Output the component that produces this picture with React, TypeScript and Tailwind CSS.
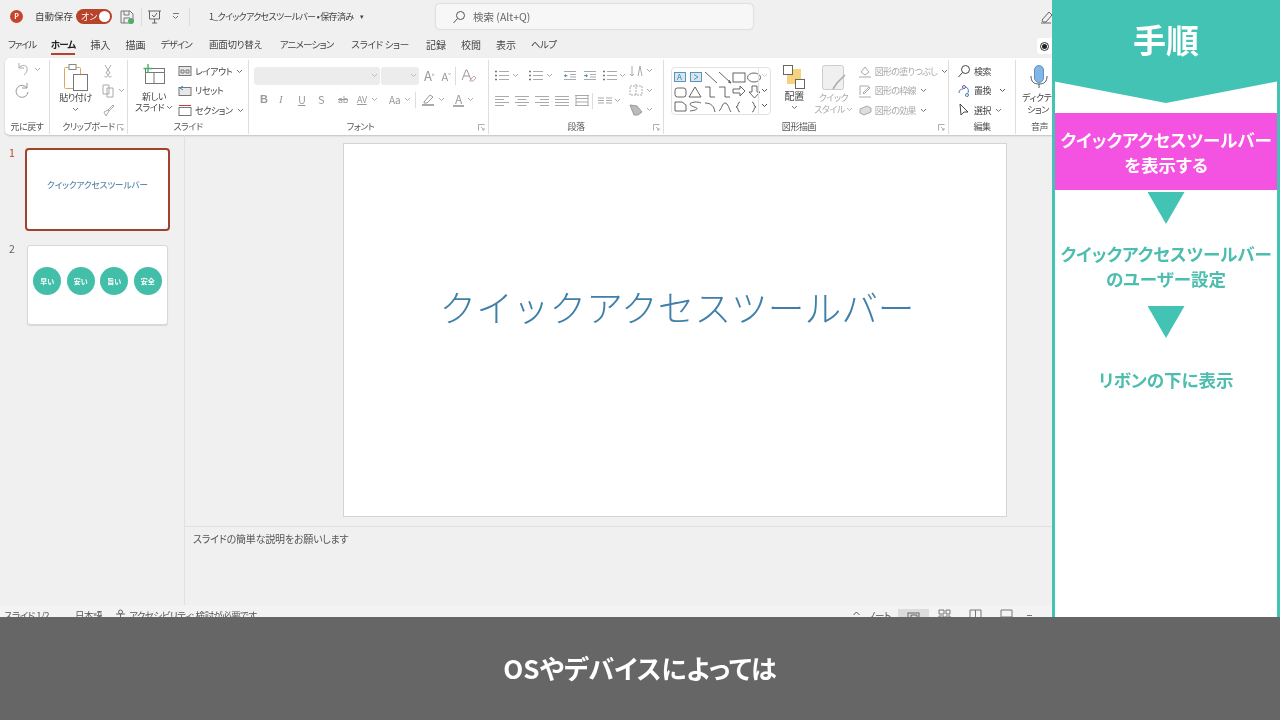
import React from "react";

const Chev = ({ c = "#777" }: { c?: string }) => (
  <svg width="7" height="5" viewBox="0 0 7 5" className="shrink-0"><path d="M1 1l2.5 2.5L6 1" fill="none" stroke={c} strokeWidth="1" /></svg>
);

const Ico = ({ w = 14, h = 14, children }: { w?: number; h?: number; children: React.ReactNode }) => (
  <svg width={w} height={h} viewBox={`0 0 ${w} ${h}`} fill="none" stroke="#8a8a8a" strokeWidth="1" className="shrink-0">{children}</svg>
);

const Launcher = () => (
  <svg width="7" height="7" viewBox="0 0 7 7" className="absolute right-[3px] bottom-[3px]" fill="none" stroke="#999" strokeWidth="0.8"><path d="M.5 6.5v-6h6M3 3l3 3M6 4v2H4" /></svg>
);

const Group = ({ w, label, children, launcher, lc = "" }: { w: string; label: string; children: React.ReactNode; launcher?: boolean; lc?: string }) => (
  <div className={`relative flex flex-col shrink-0 h-[74px] pt-[2px] border-r border-[#dedede] ${w}`}>
    <div className="flex-1 flex min-h-0">{children}</div>
    <div className={`text-center text-[9px] leading-[12px] text-[#555] pb-[1px] ${lc}`}>{label}</div>
    {launcher && <Launcher />}
  </div>
);

const Bullets = () => (
  <Ico w={14} h={11}><path d="M4 1.500h10M4 5.500h10M4 9.500h10" stroke="#aaa" /><path d="M0 1.500h2M0 5.500h2M0 9.500h2" stroke="#777" strokeWidth="1.600" /></Ico>
);
const Indent = ({ flip }: { flip?: boolean }) => (
  <Ico w={14} h={11}><path d="M1 1.500h12M7 4.500h6M7 7h6M1 9.500h12" stroke="#aaa" /><path d={flip ? "M1 5.700h3M3 4.500l1.500 1.200L3 7" : "M4.500 5.700h-3M3 4.500L1.500 5.700 3 7"} stroke="#3f88b8" /></Ico>
);
const Align = ({ d }: { d: string }) => (
  <Ico w={14} h={11}><path d={d} stroke="#aaa" /></Ico>
);

const SmallRow = ({ icon, label, chev, gray }: { icon: React.ReactNode; label: string; chev?: boolean; gray?: boolean }) => (
  <div className={`flex items-center gap-[2px] h-[19.500px] text-[9px] whitespace-nowrap ${gray ? "text-[#a8a8a8] tracking-[-0.7px]" : "text-[#444] tracking-[-0.4px]"}`}>
    {icon}
    <span className="ml-[1px]">{label}</span>
    {chev && <span className="ml-[2px]"><Chev /></span>}
  </div>
);

const Gallery = () => (
  <svg width="100" height="47" viewBox="0 0 100 47" fill="none" stroke="#555" strokeWidth="0.9" className="absolute left-0 top-0">
    <rect x="2.500" y="4.500" width="11" height="9" fill="#d8e6f0" stroke="#4a8db5" />
    <text x="5" y="12" fontSize="8" fill="#3f7fa8" stroke="none">A</text>
    <rect x="18.500" y="4.500" width="11" height="9" fill="#d8e6f0" stroke="#4a8db5" />
    <path d="M22 6.500l4 2.500-4 2.500" stroke="#4a8db5" />
    <path d="M33 4l12 11M47 4l12 11M57 12l2 3-3-1" />
    <rect x="61" y="5" width="12" height="9" />
    <ellipse cx="82" cy="9.500" rx="6.500" ry="4.500" />
    <rect x="3" y="20" width="11" height="9" rx="2.500" />
    <path d="M17 29l6-10 6 10zM33 19h5v10h5M47 19h6v10h5M61 21h7v-3l5 5-5 5v-3h-7zM80 18h5v6h3l-5.500 6-5.500-6h3z" />
    <path d="M3 34h7l4 3v6H3zM18 43c8-1 9-3 4-4-5-2-6-4 1-5 2 0 4 0 6 1M33 35c6 0 9 3 10 9M47 43c3-2 3-8 6-8s4 6 6 9" />
    <path d="M68 34c-3 0-1 5-4 5 3 0 1 5 4 5M80 34c3 0 1 5 4 5-3 0-1 5-4 5" />
  </svg>
);

const Ribbon = () => (
  <div className="ml-[5px] w-[1275px] h-[77px] bg-white rounded-[5px] shadow-[0_1px_2px_rgba(0,0,0,0.2)] flex items-center overflow-hidden tracking-[-0.4px]">
    <Group w="w-[45px]" label="元に戻す">
      <div className="flex flex-col pl-[10px] -mt-[3px]">
        <div className="flex items-center gap-[3px] h-[21px]">
          <Ico w={16} h={16}><path d="M4 2v5h5M4 7c2-3 7-4 8 0 .6 2-.5 5-3 7" stroke="#aaa" /></Ico>
          <Chev c="#aaa" />
        </div>
        <div className="h-[21px] flex items-center">
          <Ico w={16} h={16}><path d="M12 1v5H7M12 6a6 6 0 1 0 1 4" stroke="#999" /></Ico>
        </div>
      </div>
    </Group>
    <Group w="w-[78px]" label="クリップボード" launcher>
      <div className="w-[46px] flex flex-col items-center pt-[1px] pl-[5px]">
        <svg width="26" height="28" viewBox="0 0 26 28" fill="none">
          <rect x="1.500" y="4.500" width="16" height="21" rx="1" stroke="#d9a857" />
          <rect x="6" y="1.500" width="7" height="5" fill="#fff" stroke="#888" />
          <rect x="10.500" y="11.500" width="14" height="16" fill="#fff" stroke="#777" />
        </svg>
        <span className="text-[9px] leading-[12px] mt-[1px] text-[#444] whitespace-nowrap">貼り付け</span>
        <span className="mt-[3px]"><Chev /></span>
      </div>
      <div className="flex flex-col pl-[3px]">
        <div className="h-[19px] flex items-center pl-[2px]"><Ico><path d="M4 1l5 8M10 1L5 9M5 9a2 2 0 1 1-1.500 3.500M9 9a2 2 0 1 0 1.500 3.500" stroke="#aaa" /></Ico></div>
        <div className="h-[20px] flex items-center gap-[3px] pl-[2px]"><Ico><path d="M2 1h6v9H2zM6 4h6v9H6z" stroke="#aaa" /></Ico><Chev c="#aaa" /></div>
        <div className="h-[19px] flex items-center pl-[2px]"><Ico><path d="M7 7l5-5 1 1-5 5zM7 7l-4 2 2 4 3-5" stroke="#aaa" /></Ico></div>
      </div>
    </Group>
    <Group w="w-[121px]" label="スライド">
      <div className="w-[50px] flex flex-col items-center pt-[2px] pl-[2px]">
        <svg width="24" height="21" viewBox="0 0 24 21" fill="none">
          <rect x="3.500" y="4.500" width="19" height="15" stroke="#777" fill="#fff" />
          <path d="M3.500 8.500h19M12 8.500v11" stroke="#777" />
          <path d="M6 0v9M1.500 4.500h9" stroke="#4caf6a" strokeWidth="1.400" />
        </svg>
        <span className="text-[9px] leading-[11px] mt-[6px] text-[#444]">新しい</span>
        <span className="text-[9px] leading-[11px] text-[#444] whitespace-nowrap flex items-center gap-[2px]">スライド <Chev /></span>
      </div>
      <div className="flex flex-col">
        <SmallRow icon={<Ico w={14} h={12}><rect x="1" y="1.500" width="12" height="9" fill="#e8e8e8" stroke="#777" /><path d="M3 5h3v3H3zM8 5h3v3H8z" stroke="#777" /></Ico>} label="レイアウト" chev />
        <SmallRow icon={<Ico w={14} h={12}><rect x="1" y="2.500" width="12" height="8" fill="#e8e8e8" stroke="#777" /><path d="M5 1L2 3l3 2" stroke="#3b82b5" /></Ico>} label="リセット" />
        <SmallRow icon={<Ico w={14} h={12}><rect x="1" y="3.500" width="12" height="8" fill="#fff" stroke="#777" /><path d="M1 1.500h12" stroke="#b7432a" /></Ico>} label="セクション" chev />
      </div>
    </Group>
    <Group w="w-[240px]" label="フォント" launcher lc="pr-[16px]">
      <div className="flex flex-col pl-[5px] pt-[5px]">
        <div className="flex items-center">
          <div className="w-[126px] h-[18px] bg-[#ececec] rounded-[3px] flex items-center justify-end pr-[2px]"><Chev c="#bbb" /></div>
          <div className="ml-[1px] w-[38px] h-[18px] bg-[#ececec] rounded-[3px] flex items-center justify-end pr-[2px]"><Chev c="#bbb" /></div>
          <span className="ml-[5px] text-[13px] leading-[18px] text-[#999]">A<sup className="text-[6px]">^</sup></span>
          <span className="ml-[7px] text-[11px] leading-[18px] text-[#999]">A<sup className="text-[6px]">ˇ</sup></span>
          <div className="ml-[4px] h-[18px] border-l border-[#ddd]" />
          <span className="ml-[5px]"><Ico w={16} h={15}><path d="M1 12L5 2h1l4 10M3 8h5" stroke="#999" /><path d="M9 12l4-4 2 2-3 3H9z" stroke="#c9a0a0" /></Ico></span>
        </div>
        <div className="flex items-center h-[18px] mt-[6px] pl-[6px] text-[#9a9a9a] text-[11px] leading-none">
          <b className="w-[19px] [font-family:'Liberation_Sans']">B</b>
          <i className="w-[19px] [font-family:'Liberation_Serif']">I</i>
          <u className="w-[20px]">U</u>
          <span className="w-[20px]">S</span>
          <s className="w-[19px] text-[9px]">ab</s>
          <span className="w-[14px] text-[9px] underline">AV</span>
          <span className="mr-[11px]"><Chev c="#aaa" /></span>
          <span className="text-[10px] w-[15px]">Aa</span>
          <Chev c="#aaa" />
          <div className="ml-[4px] h-[16px] border-l border-[#ddd]" />
          <span className="ml-[5px] flex items-center gap-[3px]">
            <Ico w={14} h={13}><path d="M3 9l6-7 3 2-6 6H3z" stroke="#999" /><path d="M1 12h12" stroke="#aaa" strokeWidth="2" /></Ico>
            <Chev c="#aaa" />
          </span>
          <span className="ml-[8px] flex items-center gap-[3px]">
            <span className="text-[12px] border-b-2 border-[#aaa] leading-[12px] px-[2px]">A</span>
            <Chev c="#aaa" />
          </span>
        </div>
      </div>
    </Group>
    <Group w="w-[175px]" label="段落" launcher>
      <div className="flex flex-col pl-[6px] pt-[5px] w-[140px]">
        <div className="flex items-center h-[18px]">
          <Bullets /><span className="ml-[3px] mr-[10px]"><Chev c="#aaa" /></span>
          <Bullets /><span className="ml-[3px] mr-[10px]"><Chev c="#aaa" /></span>
          <Indent /><span className="ml-[6px]"><Indent flip /></span><span className="ml-[6px]"><Bullets /></span><span className="ml-[2px]"><Chev c="#aaa" /></span>
        </div>
        <div className="flex items-center h-[18px] mt-[7px]">
          <span className="mr-[6px]"><Align d="M0 1.500h14M0 4.500h9M0 7.500h14M0 10.500h9" /></span>
          <span className="mr-[6px]"><Align d="M0 1.500h14M2.500 4.500h9M0 7.500h14M2.500 10.500h9" /></span>
          <span className="mr-[6px]"><Align d="M0 1.500h14M5 4.500h9M0 7.500h14M5 10.500h9" /></span>
          <span className="mr-[6px]"><Align d="M0 1.500h14M0 4.500h14M0 7.500h14M0 10.500h14" /></span>
          <Align d="M0 .500h14M0 10.500h14M1 3.500h12M1 7h12M1 .500v10M13 .500v10" />
          <div className="ml-[3px] h-[16px] border-l border-[#ddd]" />
          <span className="ml-[5px]"><Align d="M0 3h6M0 5.500h6M0 8h6M8 3h6M8 5.500h6M8 8h6" /></span><span className="ml-[2px]"><Chev c="#aaa" /></span>
        </div>
      </div>
      <div className="flex flex-col -mt-[1px]">
        <div className="h-[20px] flex items-center gap-[3px]"><Ico w={14} h={14}><path d="M3 2v10M1 10l2 2 2-2M9 12l2-10 2 10" stroke="#aaa" /></Ico><Chev c="#aaa" /></div>
        <div className="h-[19px] flex items-center gap-[3px]"><Ico w={14} h={14}><path d="M1 3h12v9H1zM7 1v12" stroke="#aaa" strokeDasharray="2 1" /></Ico><Chev c="#aaa" /></div>
        <div className="h-[19px] flex items-center gap-[3px]"><Ico w={14} h={14}><path d="M1 3l7 1 5 6-4 3H5z" fill="#bbb" stroke="#999" /></Ico><Chev c="#aaa" /></div>
      </div>
    </Group>
    <Group w="w-[285px]" label="図形描画" launcher lc="pr-[14px]">
      <div className="relative ml-[7px] mt-[5px] w-[100px] h-[48px] border border-[#e2e2e2] rounded-[4px] shrink-0">
        <Gallery />
        <div className="absolute right-0 top-0 w-[12px] h-full border-l border-[#e2e2e2] flex flex-col items-center justify-around">
          <Chev c="#ccc" /><Chev c="#555" /><Chev c="#555" />
        </div>
      </div>
      <div className="w-[46px] ml-[1px] flex flex-col items-center pt-[2px]">
        <svg width="24" height="26" viewBox="0 0 24 26" fill="none">
          <rect x="5" y="5" width="14" height="15" fill="#f7d27c" />
          <rect x="1.500" y="1.500" width="9" height="9" fill="#fff" stroke="#666" />
          <rect x="13.500" y="15.500" width="9" height="9" fill="#fff" stroke="#666" />
        </svg>
        <span className="text-[10px] leading-[12px] text-[#444]">配置</span>
        <span className="mt-[3px]"><Chev /></span>
      </div>
      <div className="w-[46px] ml-[-5px] flex flex-col items-center pt-[2px] text-[#aaa]">
        <svg width="26" height="28" viewBox="0 0 26 28" fill="none">
          <rect x="1.500" y="1.500" width="21" height="24" rx="2" fill="#f0f0f0" stroke="#ccc" />
          <path d="M12 25l4-6 8-8" stroke="#aaa" strokeWidth="1.500" />
        </svg>
        <span className="text-[9px] leading-[12px]">クイック</span>
        <span className="text-[9px] leading-[12px] whitespace-nowrap flex items-center gap-[1px]">スタイル <Chev c="#bbb" /></span>
      </div>
      <div className="flex flex-col pl-[2px]">
        <SmallRow gray icon={<Ico w={14} h={14}><path d="M3 8l4-5 4 5-4 3zM1 13h12" stroke="#aaa" /></Ico>} label="図形の塗りつぶし" chev />
        <SmallRow gray icon={<Ico w={14} h={14}><path d="M2 11V2h9M5 9l6-6 1 1-6 6zM1 13h12" stroke="#aaa" /></Ico>} label="図形の枠線" chev />
        <SmallRow gray icon={<Ico w={14} h={14}><path d="M2 6l7-3 4 2v4l-7 3-4-2z" fill="#ddd" stroke="#aaa" /></Ico>} label="図形の効果" chev />
      </div>
    </Group>
    <Group w="w-[67px]" label="編集">
      <div className="flex flex-col pl-[8px]">
        <SmallRow icon={<Ico><circle cx="8.500" cy="5.500" r="4" stroke="#444" /><path d="M5.500 8.500L1.500 13" stroke="#444" /></Ico>} label="検索" />
        <div className="flex items-center">
          <SmallRow icon={<Ico><path d="M2 9c0-3 2-4 4-4M9 3c2 1 3 3 2 6" stroke="#3b82b5" /><circle cx="7" cy="3" r="1.500" stroke="#7a4ea8" /><circle cx="10" cy="11" r="1.500" stroke="#3b82b5" /></Ico>} label="置換" />
          <span className="ml-[8px]"><Chev c="#555" /></span>
        </div>
        <SmallRow icon={<Ico><path d="M3 1l1 11 3-3 4 0z" stroke="#444" /></Ico>} label="選択" chev />
      </div>
    </Group>
    <Group w="w-[60px]" label="音声" lc="pr-[12px]">
      <div className="flex flex-col items-start pl-[6px]">
        <svg width="18" height="24" viewBox="0 0 18 24" fill="none" className="ml-[8px] mt-[3px]">
          <rect x="4.500" y="0.500" width="9" height="17" rx="4.500" fill="#82b6e6" stroke="#5a93c9" />
          <path d="M1 11c0 6 3 8 8 8s8-2 8-8M9 19v4" stroke="#555" />
        </svg>
        <span className="text-[9px] leading-[12px] mt-[3px] text-[#444] whitespace-nowrap">ディクテー</span>
        <span className="text-[9px] leading-[12px] pl-[5px] text-[#444] whitespace-nowrap flex items-center gap-[2px]">ション <Chev /></span>
      </div>
    </Group>
  </div>
);

const Circle = ({ t }: { t: string }) => (
  <div className="w-[28px] h-[28px] rounded-full bg-[#43bfa9] flex items-center justify-center text-white text-[7px] font-bold">{t}</div>
);

const Triangle = () => <div className="w-[37px] h-[32px] bg-[#43c3b3] [clip-path:polygon(0_0,100%_0,50%_100%)] mx-auto" />;

export default function App() {
  return (
    <div className="relative w-[1280px] h-[720px] overflow-hidden bg-[#f0f0f0] font-['Noto_Sans_CJK_JP',sans-serif] [font-feature-settings:'palt'] text-[#444] blur-[0.3px]">
      <div className="flex items-center h-[33px] w-[1052px] text-[9.500px]">
        <div className="ml-[10px] w-[13px] h-[13px] rounded-full bg-[#c8432a] text-white text-[7px] font-bold flex items-center justify-center shrink-0">P</div>
        <span className="ml-[12px] w-[36px] whitespace-nowrap">自動保存</span>
        <div className="ml-[5px] w-[36px] h-[15px] rounded-full bg-[#b7432a] flex items-center justify-between pl-[5px] pr-[2px] text-white text-[9px] shrink-0">
          オン<span className="w-[11px] h-[11px] rounded-full bg-white" />
        </div>
        <span className="ml-[8px]"><Ico><path d="M1 1h9l3 3v9H1zM4 1v4h5V1M4 13V8h6" stroke="#777" /><circle cx="11" cy="11" r="2.500" fill="#4caf6a" stroke="#4caf6a" /></Ico></span>
        <div className="ml-[7px] h-[18px] border-l border-[#ddd]" />
        <span className="ml-[5px]"><Ico w={15} h={15}><path d="M1 2h13M2.500 2v8h10V2M7.500 10v4M5 14h5M5 6l2 2 3-4" stroke="#666" /></Ico></span>
        <span className="ml-[10px] flex flex-col items-center"><span className="w-[6px] border-t border-[#777] mb-[1px]" /><Chev /></span>
        <div className="ml-[10px] h-[18px] border-l border-[#ddd]" />
        <span className="ml-[19px] text-[9px] tracking-[-0.7px] whitespace-nowrap w-[147px]">1_クイックアクセスツールバー • 保存済み</span>
        <span className="ml-[4px] text-[7px]">▾</span>
        <div className="ml-[72px] w-[317px] h-[25px] bg-[#f7f7f7] rounded-[4px] shadow-[0_0_2px_rgba(0,0,0,0.25)] flex items-center pl-[16px] text-[#666] text-[10.500px] shrink-0">
          <Ico><circle cx="8.500" cy="5.500" r="4" stroke="#555" /><path d="M5.500 8.500L1.500 13" stroke="#555" /></Ico>
          <span className="ml-[7px]">検索 (Alt+Q)</span>
        </div>
        <span className="ml-auto mr-[-2px]"><Ico><path d="M2 10l7-8 3 3-6 7H3zM1 13h10" stroke="#666" /></Ico></span>
      </div>

      <div className="flex items-start h-[25px] w-[1052px] pl-[8px] pt-[4px] gap-[15px] text-[10px] leading-[15px] text-[#444] whitespace-nowrap relative">
        <span className="text-[9.500px] tracking-[-1.3px]">ファイル</span>
        <span className="text-[9.500px] tracking-[-0.8px] font-bold text-[#222] border-b-2 border-[#b7432a] pb-[1px]">ホーム</span>
        <span>挿入</span>
        <span>描画</span>
        <span className="text-[9.500px] tracking-[-0.8px]">デザイン</span>
        <span className="ml-[2px] text-[9.500px] tracking-[-0.3px]">画面切り替え</span>
        <span className="ml-[3px] text-[9.500px] tracking-[-0.8px]">アニメーション</span>
        <span className="ml-[3px] text-[9.500px] tracking-[-0.3px]">スライド ショー</span>
        <span className="ml-[2px]">記録</span>
        <span>校閲</span>
        <span>表示</span>
        <span className="text-[9.500px] tracking-[-0.5px]">ヘルプ</span>
        <div className="absolute right-0 top-[5px] w-[15px] h-[16px] bg-white rounded-l-[3px] flex items-center justify-center">
          <span className="w-[9px] h-[9px] rounded-full border border-[#333] flex items-center justify-center"><span className="w-[5px] h-[5px] rounded-full bg-[#222]" /></span>
        </div>
      </div>

      <Ribbon />

      <div className="flex h-[470px]">
        <div className="w-[185px] shrink-0 border-r border-[#e0e0e0] pt-[13px]">
          <div className="flex items-start">
            <span className="w-[25px] pl-[9px] text-[10.500px] leading-[10px] text-[#b7432a]">1</span>
            <div className="w-[145px] h-[83px] bg-white border-2 border-[#a0432c] rounded-[4px] flex items-center justify-center pb-[11px] text-[8.500px] font-medium text-[#5d8bab]">クイックアクセスツールバー</div>
          </div>
          <div className="flex items-start mt-[14px]">
            <span className="w-[27px] pl-[9px] text-[10.500px] leading-[8px] text-[#666]">2</span>
            <div className="w-[141px] h-[80px] bg-white border border-[#d8d8d8] rounded-[3px] shadow-[0_1px_1px_rgba(0,0,0,0.1)] flex items-center justify-center gap-[5.500px] pb-[8px]">
              <Circle t="早い" />
              <Circle t="安い" />
              <Circle t="旨い" />
              <Circle t="安全" />
            </div>
          </div>
        </div>
        <div className="flex flex-col w-[1095px]">
          <div className="h-[391px] pl-[158px] pt-[8px]">
            <div className="w-[664px] h-[374px] bg-white border border-[#d4d4d4] flex items-center justify-center pb-[46px] pl-[4px] text-[36.700px] font-light text-[#3f7fa8] whitespace-nowrap [font-feature-settings:normal]">
              クイックアクセスツールバー
            </div>
          </div>
          <div className="flex-1 border-t border-[#e0e0e0] pl-[8px] pt-[4px] text-[10px] leading-[15px] tracking-[-0.2px] text-[#555]">スライドの簡単な説明をお願いします</div>
        </div>
      </div>

      <div className="w-[1052px] h-[30px] bg-[#f3f3f3] flex items-start pl-[4px] pt-[4px] text-[9.500px] tracking-[-0.5px] leading-[13px] text-[#555] whitespace-nowrap">
        <span className="w-[71px]">スライド 1/2</span>
        <span className="w-[40px]">日本語</span>
        <span className="mr-[3px]"><Ico w={11} h={11}><circle cx="5.500" cy="3" r="2" stroke="#666" /><path d="M1 5h9M5.500 5v6" stroke="#666" /></Ico></span>
        <span className="w-[118px]">アクセシビリティ: 検討が必要です</span>
        <span className="ml-[603px]"><Ico w={13} h={11}><path d="M1 9h11M3.500 6l3-3 3 3" stroke="#555" /></Ico></span>
        <span className="ml-[5px] w-[30px]">ノート</span>
        <div className="w-[31px] h-[16px] bg-[#dcdcdc] flex items-center justify-center shrink-0"><Ico w={13} h={10}><rect x="1" y="1" width="11" height="9" stroke="#666" /><path d="M4 3h6v4H4z" stroke="#666" /></Ico></div>
        <span className="ml-[9px]"><Ico w={13} h={11}><path d="M1 1h5v4H1zM8 1h4v4H8zM1 7h5v4H1zM8 7h4v4H8z" stroke="#777" /></Ico></span>
        <span className="ml-[18px]"><Ico w={13} h={11}><path d="M1 1h11v9H1zM6.500 1v9" stroke="#777" /></Ico></span>
        <span className="ml-[18px]"><Ico w={13} h={11}><path d="M1 1h11v7H1zM6.500 8v3" stroke="#777" /></Ico></span>
        <span className="ml-[14px] w-[5px] mt-[6px] border-t border-[#777]" />
      </div>

      <div className="absolute top-0 right-0 w-[228px] h-[617px] bg-white border-x-[3px] border-[#43c3b3] flex flex-col">
        <div className="-mx-[3px] h-[103px] bg-[#43c3b3] [clip-path:polygon(0_0,100%_0,100%_81px,50%_103px,0_81px)] flex justify-center pt-[13px] text-white text-[33px] leading-[52px] font-bold shrink-0">
          手順
        </div>
        <div className="mt-[10px] h-[77px] bg-[#f452e0] flex flex-col items-center justify-center text-white text-[17.500px] leading-[25px] font-bold whitespace-nowrap shrink-0">
          <span>クイックアクセスツールバー</span>
          <span>を表示する</span>
        </div>
        <div className="mt-[2px] shrink-0"><Triangle /></div>
        <div className="mt-[17px] flex flex-col items-center text-[#4dbdae] text-[17.500px] leading-[25px] font-bold whitespace-nowrap shrink-0">
          <span>クイックアクセスツールバー</span>
          <span>のユーザー設定</span>
        </div>
        <div className="mt-[15px] shrink-0"><Triangle /></div>
        <div className="mt-[29px] text-center text-[#4dbdae] text-[17.500px] leading-[25px] font-bold shrink-0">リボンの下に表示</div>
      </div>

      <div className="absolute bottom-0 left-0 w-[1280px] h-[103px] bg-[#666666] flex items-center justify-center pb-[3px] text-white text-[26px] font-bold">
        OSやデバイスによっては
      </div>
    </div>
  );
}
